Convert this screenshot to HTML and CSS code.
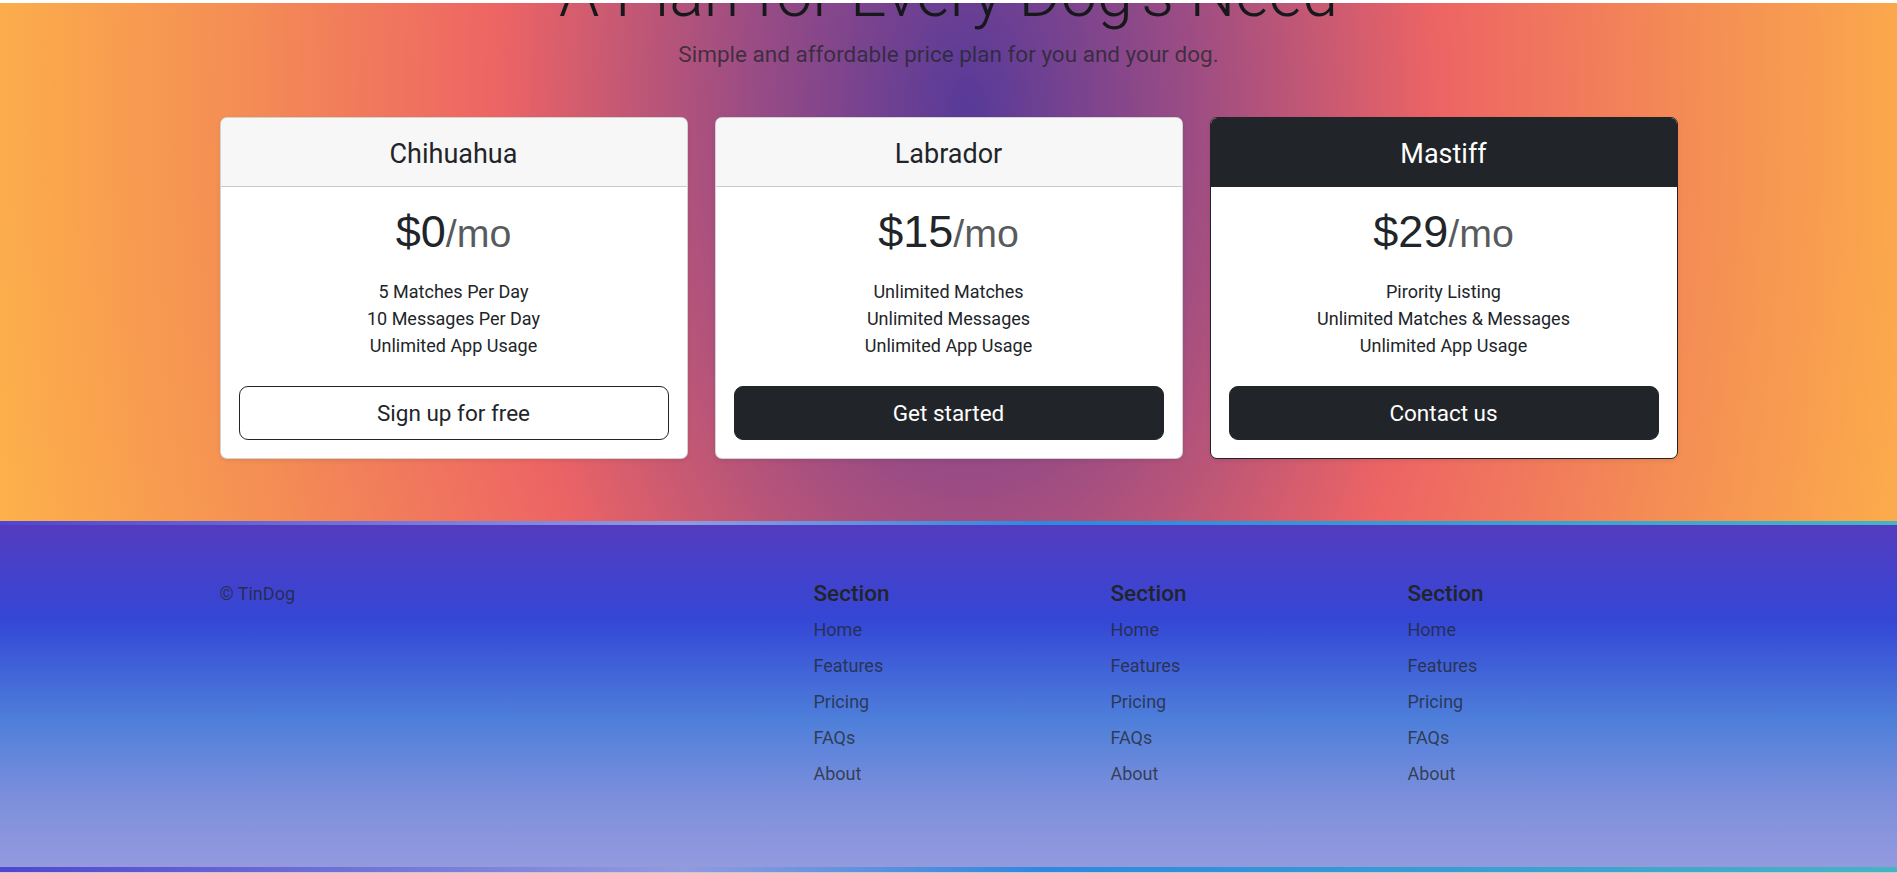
FILE: index.html
```html
<!DOCTYPE html>
<html lang="en">
<head>
<meta charset="utf-8">
<title>TinDog – Pricing</title>
<link rel="stylesheet" href="styles.css">
</head>
<body>
<div class="top-edge"></div>
<section class="pricing">
  <div class="pricing-header">
    <h1 class="pricing-title">A Plan for Every Dog's Need</h1>
    <p class="pricing-lead">Simple and affordable price plan for you and your dog.</p>
  </div>
  <div class="plans">
    <div class="card">
      <div class="card-header"><h4 class="plan-name">Chihuahua</h4></div>
      <div class="card-body">
        <h2 class="price">$0<small class="per">/mo</small></h2>
        <ul class="features">
          <li>5 Matches Per Day</li>
          <li>10 Messages Per Day</li>
          <li>Unlimited App Usage</li>
        </ul>
        <button class="btn btn-outline" type="button">Sign up for free</button>
      </div>
    </div>
    <div class="card">
      <div class="card-header"><h4 class="plan-name">Labrador</h4></div>
      <div class="card-body">
        <h2 class="price">$15<small class="per">/mo</small></h2>
        <ul class="features">
          <li>Unlimited Matches</li>
          <li>Unlimited Messages</li>
          <li>Unlimited App Usage</li>
        </ul>
        <button class="btn btn-dark" type="button">Get started</button>
      </div>
    </div>
    <div class="card card-dark">
      <div class="card-header card-header-dark"><h4 class="plan-name">Mastiff</h4></div>
      <div class="card-body">
        <h2 class="price">$29<small class="per">/mo</small></h2>
        <ul class="features">
          <li>Pirority Listing</li>
          <li>Unlimited Matches &amp; Messages</li>
          <li>Unlimited App Usage</li>
        </ul>
        <button class="btn btn-dark" type="button">Contact us</button>
      </div>
    </div>
  </div>
</section>
<div class="stripe"></div>
<footer class="site-footer">
  <div class="footer-row">
    <div class="footer-col">
      <p class="copy">© TinDog</p>
    </div>
    <div class="footer-col"></div>
    <div class="footer-col">
      <h5 class="footer-title">Section</h5>
      <ul class="footer-nav">
        <li><a href="#">Home</a></li>
        <li><a href="#">Features</a></li>
        <li><a href="#">Pricing</a></li>
        <li><a href="#">FAQs</a></li>
        <li><a href="#">About</a></li>
      </ul>
    </div>
    <div class="footer-col">
      <h5 class="footer-title">Section</h5>
      <ul class="footer-nav">
        <li><a href="#">Home</a></li>
        <li><a href="#">Features</a></li>
        <li><a href="#">Pricing</a></li>
        <li><a href="#">FAQs</a></li>
        <li><a href="#">About</a></li>
      </ul>
    </div>
    <div class="footer-col">
      <h5 class="footer-title">Section</h5>
      <ul class="footer-nav">
        <li><a href="#">Home</a></li>
        <li><a href="#">Features</a></li>
        <li><a href="#">Pricing</a></li>
        <li><a href="#">FAQs</a></li>
        <li><a href="#">About</a></li>
      </ul>
    </div>
  </div>
</footer>
<div class="stripe stripe-bottom"></div>
<div class="bottom-edge"></div>
</body>
</html>
```
FILE: styles.css
```css
* { box-sizing: border-box; }

html, body {
  margin: 0;
  padding: 0;
}

body {
  font-family: "Roboto", "Liberation Sans", sans-serif;
  font-size: 18px;
  line-height: 27px;
  color: #212529;
  background: #ffffff;
  overflow: hidden;
}

.top-edge {
  height: 3px;
  background: #ffffff;
}

/* ---------- Pricing ---------- */
.pricing {
  height: 518px;
  overflow: hidden;
  background: radial-gradient(ellipse 1000px 1700px at 968px 107px,
              #573a99 0%, #9b4c84 22%, #ed6464 47%, #f48c55 72%, #fdb14a 100%);
}

.pricing-header {
  text-align: center;
  padding-bottom: 27.6px;
}

.pricing-title {
  margin: -46.7px 0 4px;
  font-size: 64.5px;
  line-height: 77.4px;
  font-weight: 300;
  color: #16181b;
}

.pricing-lead {
  margin: 0 0 18px;
  font-size: 22.5px;
  line-height: 33.75px;
  color: rgba(33, 37, 41, 0.75);
}

.plans {
  display: flex;
  justify-content: center;
  gap: 27px;
}

.card {
  width: 468px;
  background: #ffffff;
  border: 1px solid rgba(0, 0, 0, 0.175);
  border-radius: 7px;
  box-shadow: 0 2px 4.5px rgba(0, 0, 0, 0.075);
  overflow: hidden;
  text-align: center;
}

.card-dark {
  border-color: #212529;
}

.card-header {
  padding: 20px 18px 16px;
  background: #f7f7f7;
  border-bottom: 1px solid rgba(0, 0, 0, 0.175);
}

.card-header-dark {
  background: #212529;
  border-bottom-color: #212529;
  color: #ffffff;
}

.plan-name {
  margin: 0;
  font-size: 27px;
  line-height: 32.4px;
  font-weight: 400;
}

.card-body {
  padding: 18px;
}

.price {
  margin: 0;
  font-family: "Liberation Sans", Arial, sans-serif;
  font-size: 45px;
  line-height: 54px;
  font-weight: 400;
  color: #212529;
}

.per {
  font-size: 0.875em;
  font-weight: 300;
  color: rgba(33, 37, 41, 0.75);
}

.features {
  list-style: none;
  margin: 18px 0 27px;
  padding: 0;
  height: 81px;
}

.features li {
  line-height: 27px;
}

.btn {
  display: block;
  width: 100%;
  padding: 10px 18px 8px;
  font-family: "Roboto", "Liberation Sans", sans-serif;
  font-size: 22.5px;
  line-height: 33.75px;
  border: 1px solid #212529;
  border-radius: 9px;
  cursor: pointer;
}

.btn-outline {
  background: #ffffff;
  color: #212529;
}

.btn-dark {
  background: #212529;
  color: #ffffff;
}

/* ---------- Stripes ---------- */
.stripe {
  height: 4px;
  background: linear-gradient(90deg, #5046d0 0%, #8f9bdf 36%, #2e88e0 55%, #45b4c4 100%);
}

.stripe-bottom {
  height: 5px;
}

.bottom-edge {
  height: 1px;
  background: #c9c9c9;
}

/* ---------- Footer ---------- */
.site-footer {
  padding: 54px 0;
  background: linear-gradient(180deg, #533bbf 0%, #3447d6 28%, #4e7fda 57%, #7d8fdc 80%, #939ade 100%);
}

.footer-row {
  width: 1485px;
  margin: 0 auto;
  display: grid;
  grid-template-columns: repeat(5, 1fr);
}

.footer-col {
  padding: 0 13.5px;
  margin-bottom: 18px;
}

.copy {
  margin: 0;
  padding-top: 1px;
  color: rgba(33, 37, 41, 0.75);
}

.footer-title {
  margin: 0 0 9px;
  padding-top: 1px;
  height: 27px;
  font-size: 22.5px;
  line-height: 27px;
  font-weight: 500;
  color: #212529;
}

.footer-nav {
  list-style: none;
  margin: 0;
  padding: 0;
}

.footer-nav li {
  margin-bottom: 9px;
  height: 27px;
}

.footer-nav a {
  display: block;
  padding-top: 1px;
  color: rgba(33, 37, 41, 0.75);
  text-decoration: none;
}
```
